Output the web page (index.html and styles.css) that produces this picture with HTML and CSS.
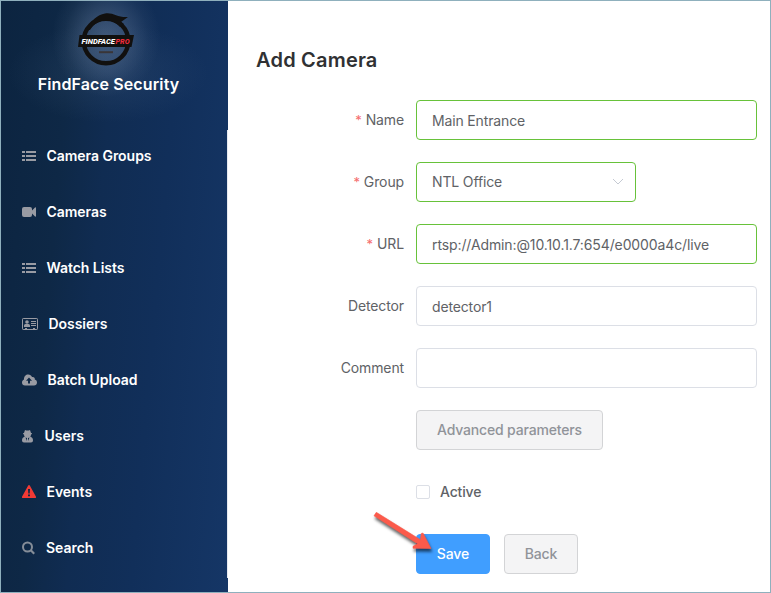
FILE: index.html
```html
<!DOCTYPE html>
<html lang="en">
<head>
<meta charset="utf-8">
<title>FindFace Security</title>
<link rel="stylesheet" href="styles.css">
</head>
<body>
<div class="app">
  <aside class="sidebar">
    <header class="brand">
      <svg class="logo" width="58" height="56" viewBox="0 0 58 56">
        <circle cx="29" cy="30" r="22.3" fill="none" stroke="#11100f" stroke-width="4.4"/>
        <path d="M9 19C15 9 20 4 28 2.500C36 1 41 7 51 6L44 11L47 13L43 16C36 7 21 6 13 19Z" fill="#11100f"/>
        <path d="M2.500 24H57L54.500 36H1Z" fill="#11100f"/>
        <path d="M22 41.200H36" stroke="#393538" stroke-width="2"/>
        <text class="logo-text" x="4.500" y="32.600" textLength="33.500" lengthAdjust="spacingAndGlyphs">FINDFACE</text>
        <text class="logo-text logo-pro" x="38.500" y="32.600" textLength="14" lengthAdjust="spacingAndGlyphs">PRO</text>
      </svg>
      <div class="brand-name">FindFace Security</div>
    </header>
    <nav class="menu">
      <a class="item"><svg width="14" height="12" viewBox="0 0 14 12"><path d="M0 1h3v2H0zM0 5h3v2H0zM0 9h3v2H0zM4 1h10v2H4zM4 5h10v2H4zM4 9h10v2H4z"/></svg><span>Camera Groups</span></a>
      <a class="item"><svg width="14" height="12" viewBox="0 0 14 12"><path d="M2 1h6q2 0 2 2v1.500L13 1.500q1-.6 1 .5v8q0 1-1 .5L10 7.500V9q0 2-2 2H2Q0 11 0 9V3Q0 1 2 1z"/></svg><span>Cameras</span></a>
      <a class="item"><svg width="14" height="12" viewBox="0 0 14 12"><path d="M0 1h3v2H0zM0 5h3v2H0zM0 9h3v2H0zM4 1h10v2H4zM4 5h10v2H4zM4 9h10v2H4z"/></svg><span>Watch Lists</span></a>
      <a class="item"><svg width="16" height="12" viewBox="0 0 16 12"><rect x=".5" y=".5" width="15" height="11" rx=".7" fill="none" stroke="#999ba3"/><circle cx="5" cy="4" r="1.800"/><path d="M2 9V7.500Q2 6 3.500 6h3Q8 6 8 7.500V9zM9 3h5v1H9zM9 5h5v1H9zM9 7h5v1H9zM3 10h2v1H3zM11 10h2v1h-2z"/></svg><span>Dossiers</span></a>
      <a class="item"><svg width="15" height="12" viewBox="0 0 15 12"><path fill-rule="evenodd" d="M3 11.500C1.200 11.500 0 10.300 0 8.500C0 7.200.8 6 2 5.500C1.800 2.500 3.800.5 6.200.5C8 .5 9.400 1.500 10 3C11.700 2.500 13.200 3.800 12.800 5.500C14.200 5.900 15 7 15 8.400C15 10.200 13.700 11.500 12 11.500ZM7 3.500L4 6.700H6V9.500H8V6.700H10Z"/></svg><span>Batch Upload</span></a>
      <a class="item"><svg width="12" height="14" viewBox="0 0 12 14"><path fill-rule="evenodd" d="M3 1Q5.500 2 8 1L9 4Q10.500 4.200 10 5L9 5.500Q9 7 8.300 7.800Q11 8.500 11 11.500Q11 13.500 9 13.500H2Q0 13.500 0 11.500Q0 8.500 2.700 7.800Q2 7 2 5.500L1 5Q.5 4.200 2 4ZM3.500 8.500L5 12V9ZM6 9V12L7.500 8.500Z"/></svg><span>Users</span></a>
      <a class="item"><svg class="alert" width="14" height="14" viewBox="0 0 14 14"><path fill-rule="evenodd" d="M7 0Q7.500 0 7.800.5L14 11.800Q14.200 13 13 13H1Q-.2 13 0 11.800L6.200.5Q6.500 0 7 0ZM6 4L6.300 8.500H7.700L8 4ZM6 9.500V11.300H8V9.500Z"/></svg><span>Events</span></a>
      <a class="item"><svg width="13.500" height="14" viewBox="0 0 13.500 14"><path d="M8.800 9.300L12.200 12.700" stroke="#858d98" stroke-width="2.200"/><circle cx="5.500" cy="6" r="4.500" fill="none" stroke="#858d98" stroke-width="2"/></svg><span>Search</span></a>
    </nav>
  </aside>
  <main class="content">
    <h1>Add Camera</h1>
    <form class="form">
      <label class="required">Name</label><div class="field valid">Main Entrance</div>
      <label class="required">Group</label><div class="field valid select"><span>NTL Office</span><svg width="12" height="8" viewBox="0 0 12 8"><path d="M1 1L6 6L11 1" fill="none" stroke="#c5cad3"/></svg></div>
      <label class="required">URL</label><div class="field valid url">rtsp://Admin:@10.10.1.7:654/e0000a4c/live</div>
      <label>Detector</label><div class="field">detector1</div>
      <label>Comment</label><div class="field"></div>
      <button type="button" class="btn advanced">Advanced parameters</button>
      <div class="check"><span class="box"></span><span>Active</span></div>
      <div class="actions">
        <button type="button" class="btn primary">Save</button>
        <button type="button" class="btn">Back</button>
        <svg class="arrow" width="66" height="48" viewBox="0 0 66 48"><path d="M5.300 4.300L3 7.800L46.500 35.800L42 38.300V40.300L60 40.500L52 25L50.200 25.500L49.500 31.800Z" fill="#fb5a4b" stroke="#fb5a4b" stroke-width=".6" stroke-linejoin="round"/></svg>
      </div>
    </form>
  </main>
</div>
</body>
</html>
```

FILE: styles.css
```css
* { box-sizing: border-box; }
body {
  margin: 0;
  font-family: Inter, "Liberation Sans", sans-serif;
  font-size: 14px;
  color: #606266;
  background: #fff;
}
.app {
  display: grid;
  grid-template-columns: 227px 1fr;
  width: 771px;
  height: 593px;
  border: 1px solid #8fb0bd;
  overflow: hidden;
}
.sidebar {
  padding-bottom: 14px;
  background: linear-gradient(95deg, #0c2440 0%, #0e2846 26%, #102c52 42%, #112f5a 65%, #153666 100%);
}
.brand {
  height: 129px;
  padding: 10px 12px 0 0;
  display: flex;
  flex-direction: column;
  align-items: center;
  background:
    radial-gradient(ellipse 54px 60px at 105px 36px, rgba(130, 150, 180, .4), rgba(130, 150, 180, .28) 40%, rgba(130, 150, 180, .07) 78%, transparent),
    radial-gradient(ellipse 100px 50px at 107px 72px, rgba(100, 130, 165, .17), rgba(100, 130, 165, .07) 60%, transparent);
}
.logo { margin-right: 6px; flex: none; }
.logo-text { font: italic 800 8px Roboto, sans-serif; fill: #fff; }
.logo-pro { fill: #ee2b3b; }
.brand-name {
  margin-top: 6px;
  font-size: 16px;
  line-height: 22px;
  font-weight: 600;
  letter-spacing: .12px;
  color: #fff;
  white-space: nowrap;
}
.menu { border-right: 1px solid #e6e9ef; }
.item {
  height: 56px;
  padding: 0 0 4px 21px;
  display: flex;
  align-items: center;
  gap: 10.500px;
  color: #fff;
  font-weight: 600;
  white-space: nowrap;
}
.item span { line-height: 18px; letter-spacing: -.04px; }
.item svg { fill: #999ba3; flex: none; }
.item svg.alert { fill: #f23a35; }
.content { padding: 46px 13px 0 28px; }
h1 {
  margin: 0;
  font-size: 20px;
  line-height: 26px;
  font-weight: 600;
  letter-spacing: .2px;
  color: #303133;
}
.form {
  margin-top: 27px;
  display: grid;
  grid-template-columns: 148px 341px;
  column-gap: 12px;
  row-gap: 22px;
}
label { text-align: right; height: 40px; line-height: 40px; letter-spacing: -.12px; }
.required::before { content: "*"; font-size: 13px; line-height: 1; color: #f56c6c; margin-right: 4px; }
.field {
  height: 40px;
  padding: 0 15px;
  border: 1px solid #dcdfe6;
  border-radius: 4px;
  line-height: 40px;
  letter-spacing: -.15px;
}
.valid { border-color: #67c23a; }
.url { letter-spacing: -.11px; }
.select {
  width: 220px;
  padding-right: 11px;
  display: flex;
  justify-content: space-between;
  align-items: center;
}
.btn {
  height: 40px;
  padding: 0 0 2px;
  width: 74px;
  border: 1px solid #d3d4d6;
  border-radius: 4px;
  background: #f4f4f5;
  color: #909399;
  font: 500 14px Inter, "Liberation Sans", sans-serif;
  letter-spacing: -.1px;
}
.advanced { width: 187px; grid-column: 2; letter-spacing: -.17px; }
.check {
  grid-column: 2;
  height: 40px;
  display: flex;
  align-items: center;
  gap: 10px;
  font-weight: 500;
  letter-spacing: -.15px;
}
.check span:last-child { padding-bottom: 2px; }
.box { width: 14px; height: 14px; border: 1px solid #dcdfe6; border-radius: 2px; }
.actions { position: relative; grid-column: 2; display: flex; gap: 14px; }
.primary { background: #409eff; border-color: #409eff; color: #fff; }
.arrow {
  position: absolute;
  left: -45px;
  top: -26px;
  filter: drop-shadow(1px 3px 1.500px rgba(0, 0, 0, .6));
}
```
